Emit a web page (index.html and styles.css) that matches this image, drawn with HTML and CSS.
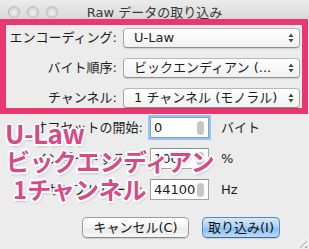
FILE: index.html
```html
<!DOCTYPE html>
<html lang="ja">
<head>
    <meta charset="UTF-8">
    <meta name="viewport" content="width=device-width, initial-scale=1.0">
    <title>Raw データの取り込み</title>
    <link rel="stylesheet" href="styles.css">
</head>
<body>

    <div class="window">
        <div class="titlebar">
            <div class="lights">
                <span class="light"></span>
                <span class="light"></span>
                <span class="light"></span>
            </div>
            <div class="title">Raw データの取り込み</div>
        </div>

        <div class="highlight">
            <label class="label">エンコーディング:</label>
            <div class="select">
                <span>U-Law</span>
                <svg class="arrows" width="6" height="10" viewBox="0 0 6 10"><path d="M3 0.5 L5.5 4 L0.5 4 Z M0.5 6 L5.5 6 L3 9.5 Z" fill="#444"/></svg>
            </div>
            <label class="label">バイト順序:</label>
            <div class="select">
                <span>ビックエンディアン (...</span>
                <svg class="arrows" width="6" height="10" viewBox="0 0 6 10"><path d="M3 0.5 L5.5 4 L0.5 4 Z M0.5 6 L5.5 6 L3 9.5 Z" fill="#444"/></svg>
            </div>
            <label class="label">チャンネル:</label>
            <div class="select">
                <span>1 チャンネル (モノラル)</span>
                <svg class="arrows" width="6" height="10" viewBox="0 0 6 10"><path d="M3 0.5 L5.5 4 L0.5 4 Z M0.5 6 L5.5 6 L3 9.5 Z" fill="#444"/></svg>
            </div>
        </div>

        <div class="fields">
            <label class="flabel">オフセットの開始:</label>
            <div class="field focus"><span>0</span><i class="pill"></i></div>
            <span class="unit">バイト</span>

            <label class="flabel">インポートする量:</label>
            <div class="field"><span>100</span><i class="pill"></i></div>
            <span class="unit">%</span>

            <label class="flabel">サンプルレート:</label>
            <div class="field"><span>44100</span><i class="pill"></i></div>
            <span class="unit">Hz</span>
        </div>

        <div class="buttons">
            <button class="btn">キャンセル(C)</button>
            <button class="btn default">取り込み(I)</button>
        </div>

        <div class="grip"></div>

        <div class="overlay">
            <p class="line one">U-Law</p>
            <p class="line two">ビックエンディアン</p>
            <p class="line three">1チャンネル</p>
        </div>
    </div>

</body>
</html>
```

FILE: styles.css
```css
* {
    box-sizing: border-box;
}

body {
    margin: 0;
    background-color: #ececec;
    font-family: "DejaVu Sans", "Noto Sans CJK JP", sans-serif;
    font-size: 13px;
    color: #1c1c1c;
}

.window {
    position: relative;
    width: 309px;
    height: 249px;
    overflow: hidden;
    background-color: #ececec;
}

.titlebar {
    height: 19px;
    display: grid;
    grid-template-columns: 1fr auto 1fr;
    align-items: start;
    padding-top: 6px;
    background: linear-gradient(#ececec, #d8d8d8);
}

.lights {
    display: flex;
    gap: 7px;
    padding-left: 8px;
}

.light {
    width: 12px;
    height: 12px;
    border-radius: 50%;
    background: radial-gradient(circle at 50% 60%, #f2f2f2, #d2d2d2 70%);
    border: 1px solid #b9b9b9;
}

.title {
    line-height: 13px;
    color: #3a3a3a;
}

.highlight {
    display: grid;
    grid-template-columns: 111px 177px;
    grid-auto-rows: 20px;
    column-gap: 6px;
    row-gap: 10px;
    align-items: center;
    width: 308px;
    border: 6px solid #e8386f;
    padding: 3px 2px 0 0;
}

.label, .flabel {
    text-align: right;
    white-space: nowrap;
    line-height: 16px;
}

.select {
    height: 20px;
    display: flex;
    align-items: center;
    justify-content: space-between;
    padding: 0 5px 0 10px;
    border: 1px solid #a8a8a8;
    border-top-color: #b8b8b8;
    border-bottom-color: #909090;
    border-radius: 4px;
    background: linear-gradient(#ffffff, #f1f1f1);
    box-shadow: 0 1px 1px rgba(0, 0, 0, 0.12);
    white-space: nowrap;
    line-height: 16px;
}

.fields {
    display: grid;
    grid-template-columns: 143px 59px auto;
    grid-auto-rows: 21px;
    column-gap: 7px;
    row-gap: 10px;
    align-items: center;
    padding-top: 3px;
}

.field {
    height: 21px;
    display: flex;
    align-items: center;
    justify-content: space-between;
    padding: 0 4px 0 3px;
    background-color: #fff;
    border: 1px solid #a4a4a4;
    border-top-color: #8a8a8a;
    line-height: 16px;
}

.field.focus {
    border-color: #7aa4d8;
    box-shadow: 0 0 0 2px #9cc2ee;
}

.pill {
    width: 7px;
    height: 14px;
    border-radius: 4px;
    background-color: #c6c6c6;
}

.unit {
    padding-left: 5px;
    line-height: 16px;
}

.buttons {
    display: flex;
    justify-content: flex-end;
    gap: 13px;
    padding-right: 29px;
    margin-top: 17px;
}

.btn {
    height: 21px;
    padding: 0;
    font-family: inherit;
    font-size: 13px;
    color: #111;
    border: 1px solid #9c9c9c;
    border-bottom-color: #858585;
    border-radius: 5px;
    background: linear-gradient(#ffffff, #f3f3f3 50%, #e9e9e9 51%, #f6f6f6);
    box-shadow: 0 1px 1px rgba(0, 0, 0, 0.12);
    width: 107px;
    line-height: 16px;
}

.btn.default {
    width: 78px;
    border-color: #5b86c0;
    border-bottom-color: #44699e;
    background: linear-gradient(#d4e9fc, #a6d0f6 50%, #86bdf0 51%, #b7dcfb);
}

.grip {
    position: absolute;
    right: 2px;
    bottom: 1px;
    width: 11px;
    height: 11px;
    background: repeating-linear-gradient(135deg, transparent 0 2px, #a0a0a0 2px 3px, #fff 3px 4px);
    clip-path: polygon(100% 0, 100% 100%, 0 100%);
}

.overlay {
    position: absolute;
    left: 0;
    top: 119px;
    font-family: "Noto Sans CJK JP", sans-serif;
    font-weight: 700;
    font-size: 24px;
    line-height: 28px;
    color: #d84a85;
    text-shadow:
        2px 0 0 #fff, -2px 0 0 #fff, 0 2px 0 #fff, 0 -2px 0 #fff,
        1.5px 1.5px 0 #fff, -1.5px 1.5px 0 #fff, 1.5px -1.5px 0 #fff, -1.5px -1.5px 0 #fff,
        1px 2px 3px rgba(0, 0, 0, 0.35);
}

.line {
    margin: 0;
    white-space: nowrap;
}

.one {
    font-size: 26px;
    padding-left: 5px;
    letter-spacing: -0.5px;
}

.two {
    padding-left: 6px;
    letter-spacing: -0.6px;
}

.three {
    padding-left: 13px;
}
```
